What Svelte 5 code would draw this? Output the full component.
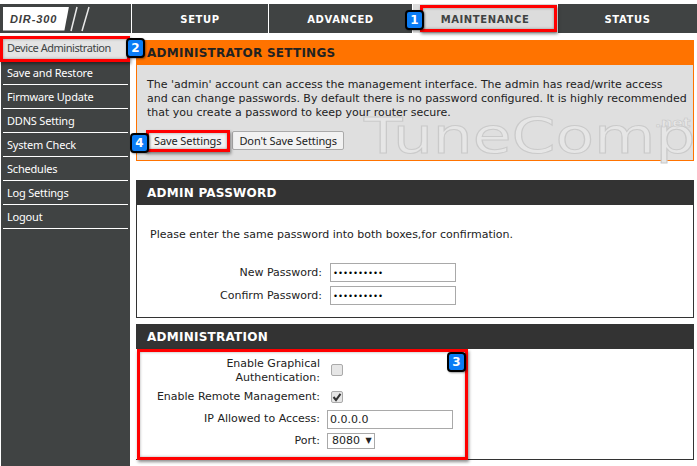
<script>
  const tabs = [
    { label: 'SETUP' },
    { label: 'ADVANCED' },
    { label: 'MAINTENANCE', active: true },
    { label: 'STATUS' }
  ];
  const menu = ['Device Administration', 'Save and Restore', 'Firmware Update', 'DDNS Setting', 'System Check', 'Schedules', 'Log Settings', 'Logout'];
</script>

<div class="page">
  <header class="top">
    <div class="logo">
      <div class="logo-plate"><span>DIR-300</span></div>
      <svg class="slashes" width="22" height="26" viewBox="0 0 22 26">
        <path d="M7 1 L1 25 M19 1 L12 25" stroke="#e8e8e8" stroke-width="1.5" fill="none" />
      </svg>
    </div>
    <nav class="tabs">
      {#each tabs as t}
        <div class="tab" class:active={t.active}>{t.label}</div>
      {/each}
    </nav>
  </header>

  <div class="main">
    <aside class="side">
      {#each menu as m, i}
        <div class="item" class:current={i === 0}>{m}</div>
      {/each}
    </aside>

    <section class="content">
      <div class="box orange">
        <h2>ADMINISTRATOR SETTINGS</h2>
        <div class="orange-body">
          <p>The 'admin' account can access the management interface. The admin has read/write access<br />and can change passwords. By default there is no password configured. It is highly recommended<br />that you create a password to keep your router secure.</p>
          <div class="buttons">
            <button>Save Settings</button>
            <button>Don't Save Settings</button>
          </div>
        </div>
        <div class="mark">TuneComp<span>.net</span></div>
      </div>

      <div class="box pw">
        <h2 class="dark">ADMIN PASSWORD</h2>
        <div class="pw-body">
          <p>Please enter the same password into both boxes,for confirmation.</p>
          <div class="row"><label for="np">New Password:</label><input id="np" type="password" value="1234567890" /></div>
          <div class="row"><label for="cp">Confirm Password:</label><input id="cp" type="password" value="1234567890" /></div>
        </div>
      </div>

      <div class="box">
        <h2 class="dark">ADMINISTRATION</h2>
        <div class="adm-body">
          <div class="arow"><span class="lbl">Enable Graphical<br />Authentication:</span><span class="check up"></span></div>
          <div class="arow"><span class="lbl">Enable Remote Management:</span><span class="check"><svg width="12" height="12" viewBox="0 0 12 12"><path d="M2.5 6 L5 9 L9.5 2.8" stroke="#333" stroke-width="2" fill="none" /></svg></span></div>
          <div class="arow"><span class="lbl">IP Allowed to Access:</span><input class="ip" type="text" value="0.0.0.0" /></div>
          <div class="arow"><span class="lbl">Port:</span><div class="sel">8080 <i>▼</i></div></div>
        </div>
      </div>
    </section>
  </div>

  <div class="hl h1"></div>
  <div class="hl h2"></div>
  <div class="hl h3"></div>
  <div class="hl h4"></div>
  <div class="badge b1">1</div>
  <div class="badge b2">2</div>
  <div class="badge b3">3</div>
  <div class="badge b4">4</div>
</div>

<style>
  :global(body) { margin: 0; background: #fff; }
  .page {
    position: relative;
    width: 697px;
    height: 466px;
    padding-top: 4px;
    box-sizing: border-box;
    overflow: hidden;
    background: #fff;
    font-family: "DejaVu Sans", sans-serif;
    font-size: 11px;
    color: #222;
  }
  .top { display: flex; height: 29px; }
  .logo { width: 131px; background: #404343; display: flex; align-items: center; padding-left: 3px; box-sizing: border-box; }
  .logo-plate {
    width: 66px; height: 24px; background: #fff; display: flex; align-items: center; padding-left: 7px; box-sizing: border-box;
    clip-path: polygon(0 0, 100% 0, 93% 100%, 0 100%);
  }
  .logo-plate span { font: italic bold 11px "Liberation Sans", sans-serif; letter-spacing: 0.9px; color: #3c3c3c; }
  .slashes { margin-left: 1px; }
  .tabs { flex: 1; display: grid; grid-template-columns: 137px 144px 145px 1fr; background: #404343; }
  .tab {
    display: flex; align-items: center; justify-content: center;
    border-left: 1px solid #fff; box-sizing: border-box; padding-top: 1px;
    color: #fff; font: bold 10px "DejaVu Sans", sans-serif; letter-spacing: 0.6px;
  }
  .tab.active { background: #dcdcdc; color: #404343; }
  .main { display: flex; gap: 6px; padding: 3px 0 0 1px; }
  .side { width: 129px; height: 430px; background: #404343; padding: 0 2px; box-sizing: border-box; font-family: "Noto Sans", sans-serif; font-size: 11px; }
  .item {
    height: 24px; box-sizing: border-box; line-height: 23px; padding-left: 4px;
    color: #fff; border-bottom: 1px solid #fff; white-space: nowrap; letter-spacing: -0.2px;
  }
  .item.current { background: #e4e4e4; color: #404343; border: none; margin: 0 -2px 1px; padding-left: 6px; letter-spacing: -0.45px; }
  .content { width: 558px; padding-top: 4px; }
  .orange { position: relative; }
  .box h2 {
    margin: 0; height: 25px; padding-left: 11px; box-sizing: border-box;
    font: bold 12px/27px "DejaVu Sans", sans-serif; letter-spacing: 0.25px; background: #ff7300; color: #222;
  }
  .box h2.dark { background: #333; color: #fff; }
  .orange-body {
    height: 96px; box-sizing: border-box; background: #dfdfdf;
    border: 1px solid #ff7300; border-top: 0; padding: 13px 9px 0 10px;
  }
  .orange-body p { margin: 0; line-height: 14px; white-space: nowrap; }
  .buttons { display: flex; gap: 4px; margin-top: 11px; }
  button {
    height: 19px; padding: 0 6px; font: 11px "Noto Sans", sans-serif; letter-spacing: -0.1px; color: #222; border-radius: 2px;
    background: #f2f2f2; border: 1px solid #aaa;
  }
  .mark {
    position: absolute; left: 228px; top: 76px; font: 50px/40px "DejaVu Sans", sans-serif;
    white-space: nowrap; color: #e6e6e6;
    -webkit-text-stroke: 1px #cacaca;
    transform: scaleX(1.26); transform-origin: left top;
  }
  .mark span { position: absolute; left: 231px; top: -3px; font-size: 12.5px; font-weight: bold; -webkit-text-stroke: 0.5px #c8c8c8; line-height: 20px; }
  .pw { margin-top: 19px; }
  .pw-body {
    height: 113px; box-sizing: border-box; border: 1px solid #333; border-top: 0; padding: 22px 13px 0;
  }
  .pw-body p { margin: 0 0 19px; line-height: 15px; }
  .row { display: flex; align-items: center; gap: 8px; height: 23px; }
  .row label { width: 172px; text-align: right; }
  input { box-sizing: border-box; border: 1px solid #a9a9a9; padding: 0 2px; margin: 0; font: 11px "DejaVu Sans", sans-serif; color: #222; background: #fff; }
  .row input { width: 126px; height: 19px; font-size: 8.5px; color: #000; }
  .pw + .box { margin-top: 6px; }
  .adm-body { height: 111px; box-sizing: border-box; padding-top: 8px; border: 1px solid #333; border-top: 0; border-left: 0; }
  .arow { display: flex; align-items: center; gap: 7px; min-height: 20px; margin-bottom: 2px; }
  .lbl { width: 184px; text-align: right; line-height: 14px; }
  .check {
    width: 12px; height: 12px; margin-left: 4px; box-sizing: border-box; border: 1px solid #aaa; border-radius: 2px;
    background: #e6e6e6; display: block; line-height: 0;
  }
  .check.up { margin-top: -3px; }
  .check svg { margin: -1px; }
  .ip { width: 126px; height: 19px; }
  .sel {
    width: 48px; height: 16px; box-sizing: border-box; border: 1px solid #a9a9a9; padding-left: 4px;
    line-height: 14px; font-size: 11px;
  }
  .sel i { font-style: normal; font-size: 8px; margin-left: 2px; vertical-align: 1px; }
  .hl {
    position: absolute; box-sizing: border-box; border: 3px solid #f00;
    box-shadow: 1px 2px 3px rgba(0, 0, 0, 0.45), inset 0 0 3px rgba(0, 0, 0, 0.35);
  }
  .h1 { left: 420px; top: 5px; width: 137px; height: 27px; }
  .h2 { left: 0; top: 36px; width: 130px; height: 26px; }
  .h3 { left: 137px; top: 349px; width: 331px; height: 111px; }
  .h4 { left: 146px; top: 130px; width: 84px; height: 22px; }
  .badge {
    position: absolute; width: 15px; height: 16px; background: #0a7cf5;
    border: 2px solid #000; border-radius: 4px; color: #fff;
    font: bold 12px/16px "DejaVu Sans", sans-serif; text-align: center;
    box-shadow: 1px 1px 2px rgba(0, 0, 0, 0.4);
  }
  .b1 { left: 405px; top: 10px; }
  .b2 { left: 126px; top: 38px; }
  .b3 { left: 447px; top: 352px; }
  .b4 { left: 130px; top: 133px; }
</style>
